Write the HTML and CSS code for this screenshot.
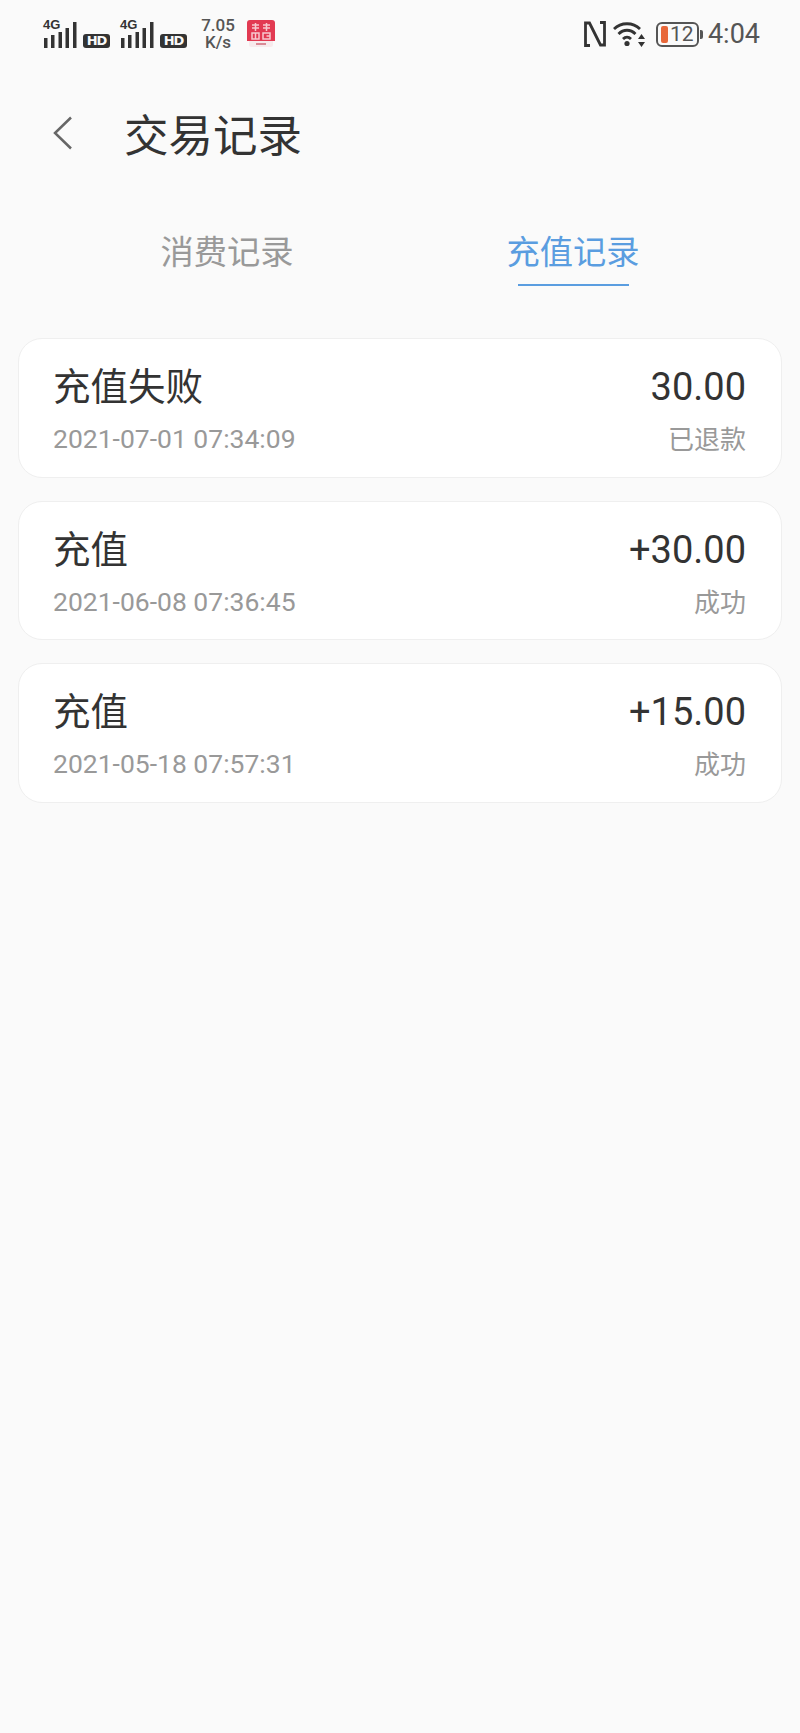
FILE: index.html
```html
<!DOCTYPE html>
<html lang="zh-CN">
<head>
<meta charset="utf-8">
<title>交易记录</title>
<link rel="stylesheet" href="styles.css">
</head>
<body>
<div class="status">
  <div class="status-left">
    <div class="sim">
      <span class="g4">4G</span>
      <svg class="bars" width="40" height="26" viewBox="0 0 40 26"><g fill="#333"><rect x="1" y="16" width="3.500" height="10"/><rect x="8" y="13" width="3.500" height="13"/><rect x="15.500" y="10" width="3.500" height="16"/><rect x="22.500" y="6" width="3.500" height="20"/><rect x="30" y="0" width="3.500" height="26"/></g></svg>
      <span class="hd">HD</span>
    </div>
    <div class="sim">
      <span class="g4">4G</span>
      <svg class="bars" width="40" height="26" viewBox="0 0 40 26"><g fill="#333"><rect x="1" y="16" width="3.500" height="10"/><rect x="8" y="13" width="3.500" height="13"/><rect x="15.500" y="10" width="3.500" height="16"/><rect x="22.500" y="6" width="3.500" height="20"/><rect x="30" y="0" width="3.500" height="26"/></g></svg>
      <span class="hd">HD</span>
    </div>
    <div class="speed"><span>7.05</span><span>K/s</span></div>
    <svg class="app" width="28" height="28" viewBox="0 0 28 28"><path d="M3 0H25a3 3 0 0 1 3 3V21H0V3a3 3 0 0 1 3-3Z" fill="#e23a52"/><path d="M2 21H26V25a2 2 0 0 1-2 2H4a2 2 0 0 1-2-2Z" fill="#f7eaec"/><g fill="none" stroke="#f7c9cf" stroke-width="1.500"><path d="M5 5H12M5 8H12M8.500 3V11M16 5H23M16 8H23M19.500 3V11"/><path d="M5 13H12V19H5ZM16 13H23V19H16ZM8.500 13V19M19.500 16H23"/></g><rect x="9" y="23" width="10" height="2" fill="#d98a96"/></svg>
  </div>
  <div class="status-right">
    <svg width="24" height="26" viewBox="0 0 24 26"><path d="M7 24.500H2.500V2H6.500L17.500 24H21.500V1.500H17" fill="none" stroke="#333" stroke-width="2.800"/></svg>
    <svg class="wifi" width="33" height="26" viewBox="0 0 33 26"><g fill="none" stroke="#333" stroke-width="2.800"><path d="M1 8C8 1 20 1 27 8"/><path d="M5.500 13C10.500 8 17.500 8 22.500 13"/><path d="M10 18C12.500 15.500 15.500 15.500 18 18"/></g><circle cx="14" cy="22.500" r="2.600" fill="#333"/><path d="M28.500 13 32 18H25ZM28.500 26 32 21H25Z" fill="#333"/></svg>
    <div class="battery"><span class="level"></span><span class="pct">12</span></div>
    <span class="time">4:04</span>
  </div>
</div>

<header class="title-bar">
  <svg class="back" width="20" height="34" viewBox="0 0 20 34"><path d="M18 1.500 2 17 18 32.500" fill="none" stroke="#666" stroke-width="2.500"/></svg>
  <h1>交易记录</h1>
</header>

<nav class="tabs">
  <div class="tab">消费记录</div>
  <div class="tab active">充值记录</div>
</nav>

<main class="list">
  <section class="card">
    <div class="row"><span class="name">充值失败</span><span class="amount">30.00</span></div>
    <div class="row sub"><span class="date">2021-07-01 07:34:09</span><span class="state">已退款</span></div>
  </section>
  <section class="card">
    <div class="row"><span class="name">充值</span><span class="amount">+30.00</span></div>
    <div class="row sub"><span class="date">2021-06-08 07:36:45</span><span class="state">成功</span></div>
  </section>
  <section class="card">
    <div class="row"><span class="name">充值</span><span class="amount">+15.00</span></div>
    <div class="row sub"><span class="date">2021-05-18 07:57:31</span><span class="state">成功</span></div>
  </section>
</main>
</body>
</html>
```

FILE: styles.css
```css
* { box-sizing: border-box; }
html, body { margin: 0; padding: 0; }
body {
  width: 800px;
  height: 1733px;
  overflow: hidden;
  background: #fafafa;
  font-family: Roboto, "Noto Sans CJK SC", sans-serif;
  color: #333;
}
.status {
  height: 58px;
  padding: 10px 40px 0 43px;
  display: flex;
  justify-content: space-between;
  align-items: center;
}
.status-left, .status-right { display: flex; align-items: center; }
.status-left { gap: 10px; }
.status-right { gap: 9px; }
.wifi { margin-left: -3px; }
.sim { position: relative; display: flex; align-items: flex-end; width: 67px; height: 30px; }
.bars { margin-bottom: 1px; }
.g4 {
  position: absolute;
  left: 0;
  top: 0;
  font: 700 13px/12px "Liberation Sans", sans-serif;
  color: #333;
  background: #fafafa;
  padding-right: 1px;
}
.hd {
  margin-bottom: 1px;
  width: 27px;
  height: 14px;
  flex: none;
  border-radius: 3px;
  background: #333;
  color: #fafafa;
  font: 700 13px/14px "DejaVu Sans", sans-serif;
  text-align: center;
  letter-spacing: -1px;
}
.speed {
  width: 38px;
  margin-left: 2px;
  display: flex;
  flex-direction: column;
  align-items: center;
  font: 500 17px/17px Roboto, sans-serif;
  color: #555;
}
.app { margin-left: 0; }
.battery {
  position: relative;
  width: 43px;
  height: 25px;
  border: 2px solid #555;
  border-radius: 6px;
  display: flex;
  align-items: center;
  margin-left: 1px;
}
.battery::after {
  content: "";
  position: absolute;
  right: -6px;
  top: 6px;
  width: 3px;
  height: 9px;
  background: #555;
  border-radius: 0 2px 2px 0;
}
.level { width: 7px; height: 17px; margin-left: 3px; background: #e8683a; border-radius: 2px; }
.pct { margin-left: 2px; font: 400 21px/21px Roboto, sans-serif; color: #555; }
.time { font: 400 27px/28px Roboto, sans-serif; color: #555; }

.title-bar {
  height: 96px;
  margin-top: 26px;
  padding: 2px 0 0 53px;
  display: flex;
  align-items: center;
}
.title-bar h1 {
  margin: 0 0 0 51px;
  font: 400 44.500px/60px "Noto Sans CJK SC", sans-serif;
  color: #333;
}
.tabs {
  margin-top: 46px;
  height: 76px;
  padding-left: 54px;
  display: grid;
  grid-template-columns: 346px 346px;
}
.tab {
  position: relative;
  text-align: center;
  font: 400 33.300px/48px "Noto Sans CJK SC", sans-serif;
  color: #999;
}
.tab.active { color: #5a9de0; }
.tab.active::after {
  content: "";
  position: absolute;
  left: 118px;
  bottom: 16px;
  width: 111px;
  height: 2px;
  background: #5a9de0;
}
.list {
  margin-top: 36px;
  padding: 0 18px;
  display: flex;
  flex-direction: column;
  gap: 23px;
}
.card {
  height: 139.500px;
  padding: 19px 35px 0 34px;
  background: #fff;
  border: 1.500px solid #efefef;
  border-radius: 24px;
}
.row { display: flex; justify-content: space-between; align-items: center; }
.name { font: 400 37.500px/52px "Noto Sans CJK SC", sans-serif; color: #333; }
.amount { font: 400 38px/52px Roboto, sans-serif; color: #333; position: relative; top: 3px; }
.sub { margin-top: 10px; }
.date { font: 400 26.500px/38px Roboto, sans-serif; color: #999; }
.state { font: 400 26px/38px "Noto Sans CJK SC", sans-serif; color: #999; position: relative; top: -1px; }
```
